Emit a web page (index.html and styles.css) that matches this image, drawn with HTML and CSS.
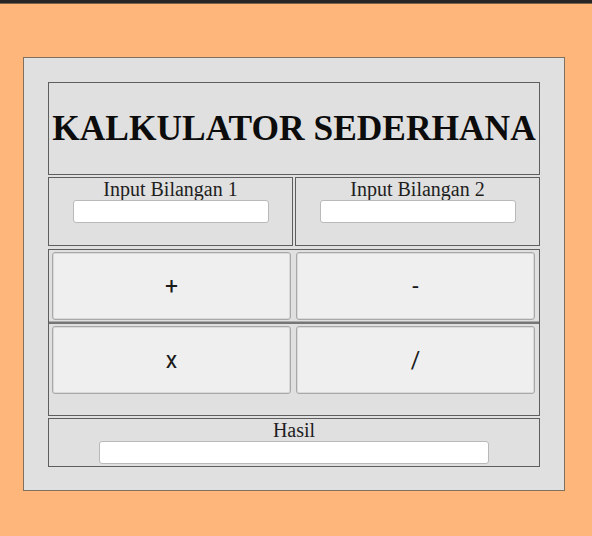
FILE: index.html
```html
<!DOCTYPE html>
<html lang="id">
<head>
<meta charset="utf-8">
<title>Kalkulator Sederhana</title>
<link rel="stylesheet" href="styles.css">
</head>
<body>
<div class="topbar"></div>
<main class="page">
  <div class="card">
    <div class="title-box">
      <h1 class="title">KALKULATOR SEDERHANA</h1>
    </div>
    <div class="inputs">
      <div class="cell">
        <label class="label" for="b1">Input Bilangan 1</label>
        <input class="field" id="b1" type="text">
      </div>
      <div class="cell">
        <label class="label" for="b2">Input Bilangan 2</label>
        <input class="field" id="b2" type="text">
      </div>
    </div>
    <div class="ops">
      <div class="ops-row first">
        <button class="btn" type="button">+</button>
        <button class="btn" type="button">-</button>
      </div>
      <div class="ops-row second">
        <button class="btn" type="button">x</button>
        <button class="btn" type="button">/</button>
      </div>
    </div>
    <div class="result">
      <label class="label" for="hasil">Hasil</label>
      <input class="field wide" id="hasil" type="text">
    </div>
  </div>
</main>
</body>
</html>
```
FILE: styles.css
```css
* { box-sizing: border-box; }

html, body {
  margin: 0;
  padding: 0;
  background: #ffb67a;
}

.topbar {
  height: 4px;
  background: #262626;
  border-bottom: 1px solid #7d6048;
}

.page {
  padding: 53px 0 0 23px;
}

.card {
  width: 542px;
  background: #e0e0e0;
  border: 1px solid #7f705f;
  padding: 24px 24px 23px 24px;
  display: flex;
  flex-direction: column;
}

.title-box {
  height: 93px;
  border: 1px solid #5e5e5e;
  padding-top: 25px;
  text-align: center;
}

.title {
  margin: 0;
  font-family: "Liberation Serif", serif;
  font-weight: bold;
  font-size: 35.4px;
  line-height: 40px;
  color: #0c0c0c;
  white-space: nowrap;
}

.inputs {
  margin-top: 2px;
  display: grid;
  grid-template-columns: 1fr 1fr;
  gap: 2px;
}

.cell {
  height: 69px;
  border: 1px solid #5e5e5e;
  display: flex;
  flex-direction: column;
  align-items: center;
}

.label {
  display: block;
  font-family: "Liberation Serif", serif;
  font-size: 20px;
  line-height: 22px;
  color: #1e1e1e;
  text-align: center;
}

.field {
  display: block;
  width: 196px;
  height: 23px;
  margin: 0;
  padding: 0 4px;
  background: #fff;
  border: 1px solid #b9b9b9;
  border-radius: 3px;
}

.field.wide {
  width: 390px;
}

.ops {
  margin-top: 3px;
  border: 1px solid #5e5e5e;
  padding-bottom: 20px;
}

.ops-row {
  display: grid;
  grid-template-columns: 1fr 1fr;
  gap: 5px;
  padding: 2px 4px 1px 3px;
}

.ops-row.first {
  border-bottom: 1px solid #a9a9a9;
}

.ops-row.second {
  border-top: 2px solid #767676;
}

.btn {
  height: 68px;
  margin: 0;
  background: #efefef;
  border: 1px solid #a8a8a8;
  box-shadow: inset 0 0 0 1px #d9d9d9;
  border-radius: 3px;
  font-family: Roboto, "Liberation Sans", sans-serif;
  font-size: 23px;
  color: #1a1a1a;
}

.result {
  margin-top: 2px;
  height: 49px;
  border: 1px solid #5e5e5e;
  display: flex;
  flex-direction: column;
  align-items: center;
}
```
